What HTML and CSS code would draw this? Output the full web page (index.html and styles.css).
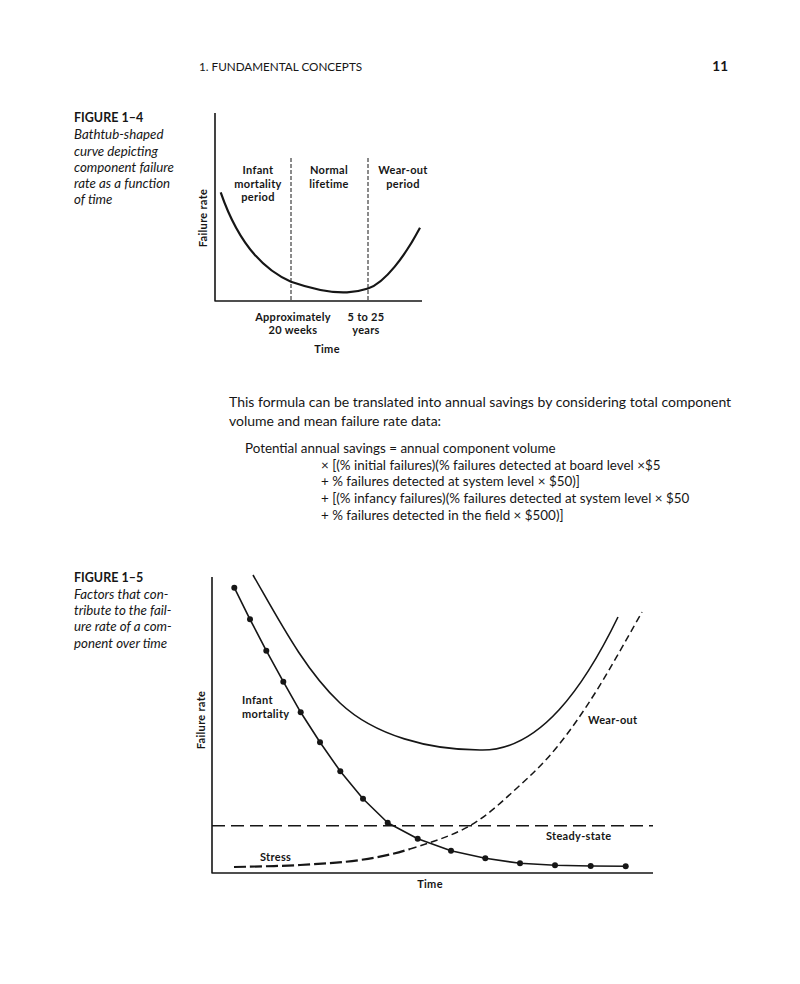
FILE: index.html
```html
<!DOCTYPE html>
<html lang="en">
<head>
<meta charset="utf-8">
<title>1. Fundamental Concepts — 11</title>
<link rel="stylesheet" href="styles.css">
</head>
<body>
<div class="page">
  <header class="running-head">
    <span class="chapter">1. FUNDAMENTAL CONCEPTS</span>
    <span class="folio">11</span>
  </header>

  <section class="figure fig4">
    <div class="caption">
      <div class="fig-label">FIGURE 1–4</div>
      <div class="fig-text">Bathtub-shaped<br>curve depicting<br>component failure<br>rate as a function<br>of time</div>
    </div>
    <svg class="chart chart4" width="250" height="255" viewBox="190 105 250 255">
      <g class="axis">
        <path d="M215,113 V301 H422"/>
      </g>
      <g class="divider">
        <path d="M291,158 V301"/>
        <path d="M368,158 V301"/>
      </g>
      <path class="curve" d="M220.7,192.3 C232,225 252,265 291,281.7 C312,289 332,293 347,292.3 C356,292 362,290.5 368,288.5 C385,283 405,256 420,227.7"/>
      <g class="label">
        <text x="258" y="174">Infant</text>
        <text x="258" y="187.5">mortality</text>
        <text x="258" y="201">period</text>
        <text x="329" y="174">Normal</text>
        <text x="329" y="187.5">lifetime</text>
        <text x="403" y="174">Wear-out</text>
        <text x="403" y="187.5">period</text>
        <text x="293" y="320.5">Approximately</text>
        <text x="293" y="334">20 weeks</text>
        <text x="366" y="320.5">5 to 25</text>
        <text x="366" y="334">years</text>
        <text x="327" y="353">Time</text>
        <text x="0" y="0" transform="translate(207,218) rotate(-90)">Failure rate</text>
      </g>
    </svg>
  </section>

  <p class="body-text">This formula can be translated into annual savings by considering total component volume and mean failure rate data:</p>

  <div class="formula">
    <div class="formula-head">Potential annual savings = annual component volume</div>
    <div class="formula-line">× [(% initial failures)(% failures detected at board level ×$5</div>
    <div class="formula-line">+ % failures detected at system level × $50)]</div>
    <div class="formula-line">+ [(% infancy failures)(% failures detected at system level × $50</div>
    <div class="formula-line">+ % failures detected in the field × $500)]</div>
  </div>

  <section class="figure fig5">
    <div class="caption">
      <div class="fig-label">FIGURE 1–5</div>
      <div class="fig-text">Factors that con-<br>tribute to the fail-<br>ure rate of a com-<br>ponent over time</div>
    </div>
    <svg class="chart chart5" width="480" height="330" viewBox="190 570 480 330">
      <g class="axis">
        <path d="M212,577 V873 H653"/>
      </g>
      <path class="steady" d="M212,825.7 H653"/>
      <path class="stress" d="M234,867 C245,866.7 279,866.2 300,865 C321,863.8 341.7,862.7 360,860 C378.3,857.3 391.7,854.7 410,849"/>
      <path class="wear" d="M410,849 C428.3,843.3 452.2,835.9 470,825.7 C487.8,815.5 502.5,801.1 517,788 C531.5,774.9 543.7,763.3 557,747 C570.3,730.7 582.8,712.5 597,690 C611.2,667.5 634.5,625 642,612"/>
      <path class="curve" d="M253,575 C280,622 305,670 340,703 C375,736 430,750 480,750 C540,752 585,685 618,617"/>
      <polyline class="curve" points="234.3,587.7 250,619.3 266.3,650.7 283.3,681.7 300.7,712.3 320,742.3 340.3,771.3 363,798.7 387.7,822.7 417.7,838.7 451,850.7 485.3,858.3 520,863.3 555,865.3 590.7,866 625.7,866.3"/>
      <g class="dots">
        <circle cx="234.3" cy="587.7" r="3"/>
        <circle cx="250" cy="619.3" r="3"/>
        <circle cx="266.3" cy="650.7" r="3"/>
        <circle cx="283.3" cy="681.7" r="3"/>
        <circle cx="300.7" cy="712.3" r="3"/>
        <circle cx="320" cy="742.3" r="3"/>
        <circle cx="340.3" cy="771.3" r="3"/>
        <circle cx="363" cy="798.7" r="3"/>
        <circle cx="387.7" cy="822.7" r="3"/>
        <circle cx="417.7" cy="838.7" r="3"/>
        <circle cx="451" cy="850.7" r="3"/>
        <circle cx="485.3" cy="858.3" r="3"/>
        <circle cx="520" cy="863.3" r="3"/>
        <circle cx="555" cy="865.3" r="3"/>
        <circle cx="590.7" cy="866" r="3"/>
        <circle cx="625.7" cy="866.3" r="3"/>
      </g>
      <g class="label">
        <text class="start" x="242" y="704">Infant</text>
        <text class="start" x="242" y="718">mortality</text>
        <text class="start" x="260" y="861">Stress</text>
        <text class="start" x="588" y="724">Wear-out</text>
        <text class="start" x="546" y="840">Steady-state</text>
        <text x="430" y="888">Time</text>
        <text x="0" y="0" transform="translate(205,720) rotate(-90)">Failure rate</text>
      </g>
    </svg>
  </section>
</div>
</body>
</html>
```

FILE: styles.css
```css
html, body {
  margin: 0;
  padding: 0;
  background: #ffffff;
}

body {
  color: #161616;
  font-family: Lato, "Open Sans", "Liberation Sans", sans-serif;
}

.page {
  width: 800px;
  height: 984px;
  box-sizing: border-box;
  overflow: hidden;
}

.running-head {
  display: flex;
  justify-content: space-between;
  align-items: center;
  padding: 59px 72px 0 199px;
  height: 14px;
  line-height: 14px;
}

.chapter {
  font-size: 11.7px;
}

.folio {
  font-size: 13.5px;
  font-weight: 700;
}

.figure {
  display: flex;
  align-items: flex-start;
  padding-left: 74px;
}

.caption {
  width: 116px;
  font-size: 13.3px;
  line-height: 16.3px;
}

.fig-label {
  font-weight: 700;
  font-size: 12.5px;
}

.fig-text {
  font-style: italic;
}

.fig4 {
  margin-top: 32px;
}

.fig4 .caption {
  padding-top: 5px;
}

.chart {
  display: block;
  flex: none;
}

.chart .axis path,
.chart .curve {
  fill: none;
  stroke: #161616;
  stroke-width: 1.6;
  stroke-linejoin: round;
}

.chart4 .curve {
  stroke-width: 2.2;
}

.chart .divider path {
  fill: none;
  stroke: #161616;
  stroke-width: 1;
  stroke-dasharray: 4 2;
}

.chart .steady {
  fill: none;
  stroke: #161616;
  stroke-width: 1.4;
  stroke-dasharray: 13 6;
}

.chart .wear {
  fill: none;
  stroke: #161616;
  stroke-width: 1.5;
  stroke-dasharray: 7 4;
}

.chart .stress {
  fill: none;
  stroke: #161616;
  stroke-width: 2.2;
  stroke-dasharray: 12 4;
}

.chart .dots circle {
  fill: #161616;
}

.chart .label text {
  font-family: Lato, "Open Sans", "Liberation Sans", sans-serif;
  font-size: 11px;
  letter-spacing: 0.3px;
  font-weight: 700;
  fill: #161616;
  text-anchor: middle;
}

.chart .label text.start {
  text-anchor: start;
}

.body-text {
  margin: 32px 0 0 229px;
  width: 520px;
  font-size: 14px;
  line-height: 19px;
}

.formula {
  margin-top: 10px;
  font-size: 13.4px;
  line-height: 16.7px;
}

.formula-head {
  padding-left: 245px;
}

.formula-line {
  padding-left: 321px;
}

.fig5 {
  margin-top: 46px;
}
```
